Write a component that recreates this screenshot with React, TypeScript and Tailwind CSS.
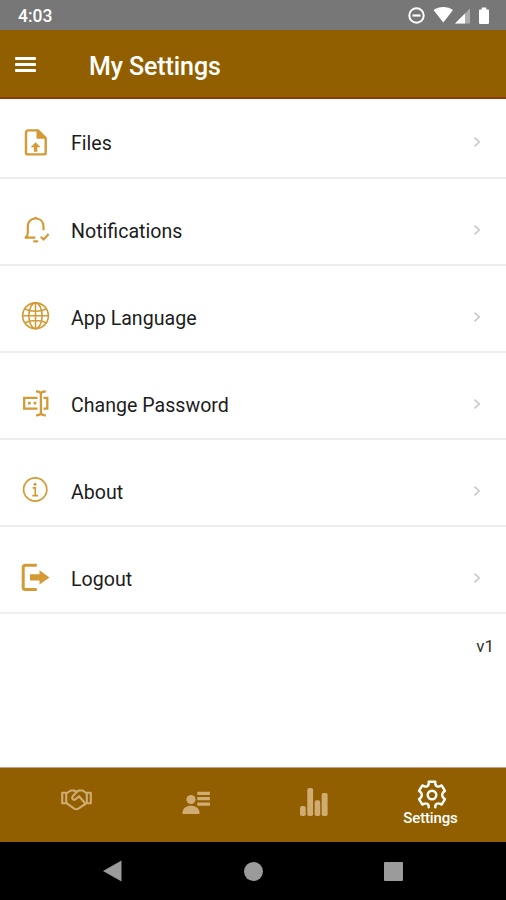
import React from 'react';

const iconClass = 'h-[31px] w-[31px] shrink-0 text-[#d39a35]';

const FilesIcon = () => (
  <svg viewBox="0 0 31 31" className={iconClass} fill="none" stroke="currentColor" strokeWidth="2.4">
    <path d="M17 4.4H7a2 2 0 0 0-2 2v20a2 2 0 0 0 2 2h15.700a2 2 0 0 0 2-2V12z" strokeLinejoin="round" />
    <path d="M15.500 4v8.700h9z" fill="currentColor" stroke="none" />
    <path d="M14.600 16.200l5 5h-3.300v4.500h-3.400v-4.500H9.600z" fill="currentColor" stroke="none" />
  </svg>
);

const BellIcon = () => (
  <svg viewBox="0 0 31 31" className={iconClass} fill="none" stroke="currentColor" strokeWidth="2.2">
    <path d="M14.500 4.500c-4.800 0-7.700 3.300-7.700 8v6.500c0 2-1 3.400-2.200 4.600h9.800" strokeLinejoin="round" />
    <path d="M14.500 4.500c4.800 0 8 3.300 8 8v3.800" />
    <path d="M12.200 4.500a2.400 2.400 0 0 1 4.600 0z" fill="currentColor" stroke="none" />
    <path d="M13.200 27.400h3" strokeLinecap="round" />
    <path d="M19.800 22.800l2.800 2.600 5-5.400" />
  </svg>
);

const GlobeIcon = () => (
  <svg viewBox="0 0 31 31" className={iconClass} fill="none" stroke="currentColor" strokeWidth="1.6">
    <circle cx="14.500" cy="14.800" r="12.900" />
    <ellipse cx="14.500" cy="14.800" rx="6.600" ry="12.900" />
    <path d="M14.500 2v26M1.600 14.800h25.800M4 8c6 3 15 3 21 0M4 21.800c6-3 15-3 21 0" />
  </svg>
);

const PasswordIcon = () => (
  <svg viewBox="0 0 31 31" className={iconClass} fill="none" stroke="currentColor" strokeWidth="2.3">
    <path d="M16.500 9.800H3.200v10.900h13.300M22.500 9.800h3.800v10.900h-3.800" />
    <path d="M15 3.400c2.800 0 4.900.6 4.900 2.800v18.400c0 2-2.100 2.800-4.900 2.800M24.800 3.400c-2.800 0-4.900.6-4.900 2.800M24.800 27.400c-2.800 0-4.900-.8-4.900-2.800" />
    <path d="M7 15.200h2.700M12.600 15.200h2.700" strokeWidth="2.700" />
  </svg>
);

const AboutIcon = () => (
  <svg viewBox="0 0 31 31" className={iconClass} fill="none" stroke="currentColor" strokeWidth="1.700">
    <circle cx="14.200" cy="14.500" r="11.600" />
    <circle cx="14" cy="9.200" r="1.500" fill="currentColor" stroke="none" />
    <path d="M11.600 12.900h2.700v7.400M11.300 20.600h5.800" />
  </svg>
);

const LogoutIcon = () => (
  <svg viewBox="0 0 31 31" className={iconClass} fill="none" stroke="currentColor" strokeWidth="3">
    <path d="M15.800 3.200H4.200a2 2 0 0 0-2 2v20.400a2 2 0 0 0 2 2h11.600" />
    <path d="M9 12.300h9.500V8.200l10 7.200-10 7.200v-4.100H9z" fill="currentColor" stroke="none" />
  </svg>
);

const HandshakeIcon = () => (
  <svg viewBox="0 0 31 22" className="h-[22px] w-[31px]" fill="none" stroke="currentColor" strokeWidth="2.100" strokeLinejoin="round">
    <path d="M1.200 3.800h4v10.400h-4zM25.800 3.800h4v10.400h-4z" />
    <path d="M5.200 4.500L9.700 1.500H13l2.500 1.300L18 1.500h3.700l4.100 3" />
    <path d="M5.200 13.800l8 5.900q2 1.200 4.200 0l8.400-5.900" />
    <path d="M16 2.600l-4.300 4.700q-1.200 2.200.6 3.300 2 .8 3.500-1.400l2.200-1.900 5.500 6.200q1 2.200-1.200 2.600" />
  </svg>
);

const ContactsIcon = () => (
  <svg viewBox="0 0 28 24" className="h-6 w-7" fill="currentColor">
    <circle cx="9" cy="8.500" r="4.600" />
    <path d="M.5 23v-1.600c0-4 4-6.600 8.500-6.600s8.500 2.600 8.500 6.600V23z" />
    <path d="M15.300.8h12.600v3.100H15.300zM15.300 6.100h12.600v3.100H15.300zM15.300 11.600h12.600v3.100H15.300z" />
  </svg>
);

const ChartIcon = () => (
  <svg viewBox="0 0 28 28" className="h-7 w-7" fill="currentColor">
    <rect y="18" width="5.700" height="10" rx="1.800" />
    <rect x="7.300" width="5.800" height="28" rx="1.800" />
    <rect x="14.700" y="12.300" width="5.500" height="15.700" rx="1.800" />
    <rect x="21.700" y="5" width="5.900" height="23" rx="1.800" />
  </svg>
);

const GearIcon = () => (
  <svg
    viewBox="-15 -15 30 30"
    className="h-[30px] w-[30px]"
    fill="none"
    stroke="currentColor"
    strokeWidth="2.400"
    strokeLinejoin="round"
    strokeLinecap="round"
  >
    <path d="M-3.300 12.300V11Q-3.500 9.400-5 8.700-6.300 8-7.600 8.700L-9.600 9.600-13 4.200-11.300 2.800Q-10.200 1.700-10.200 0T-11.300-2.800L-13-4.200-9.600-9.600-7.600-8.700Q-6.300-8-5-8.700-3.500-9.400-3.300-11V-13.200H3.300V-11Q3.500-9.400 5-8.700 6.300-8 7.600-8.700L9.600-9.600 13-4.200 11.300-2.800Q10.200-1.700 10.200 0T11.300 2.800L13 4.200 9.600 9.600 7.600 8.700Q6.300 8 5 8.700 3.500 9.400 3.300 11V12.300" />
    <circle r="4.300" />
  </svg>
);

const settingsItems = [
  { label: 'Files', icon: <FilesIcon /> },
  { label: 'Notifications', icon: <BellIcon /> },
  { label: 'App Language', icon: <GlobeIcon /> },
  { label: 'Change Password', icon: <PasswordIcon /> },
  { label: 'About', icon: <AboutIcon /> },
  { label: 'Logout', icon: <LogoutIcon /> },
];

const StatusBar = () => (
  <div className="flex h-[30px] items-center justify-between bg-[#777777] pl-[18px] pr-[15px] pt-px text-white">
    <span className="mt-0.5 text-[17.5px] font-medium leading-none">4:03</span>
    <svg viewBox="0 0 84 18" className="h-[18px] w-[84px]" fill="currentColor">
      <circle cx="9.500" cy="8.500" r="7.200" fill="none" stroke="currentColor" strokeWidth="2" />
      <path d="M5.500 7.400h8v2.200h-8z" />
      <path d="M26.500 3c5.500-4 14-4 19.500 0L36.300 15.500z" />
      <path d="M63 1.500v15H48z" opacity="0.400" />
      <path d="M58 6.500v10H48z" />
      <path d="M74.700.5h4.600v2h1.500c.8 0 1.200.5 1.200 1.200v12c0 .8-.5 1.300-1.300 1.300h-7.400c-.8 0-1.300-.5-1.300-1.300v-12c0-.8.500-1.200 1.200-1.200h1.500z" />
    </svg>
  </div>
);

export default function App() {
  return (
    <div className="flex h-[900px] w-[506px] flex-col overflow-hidden bg-white font-[Roboto,sans-serif]">
      <StatusBar />

      {/* Header */}
      <header className="flex h-[69px] items-center border-b-2 border-[#8b3a0c] bg-[#925f00] pl-[15px] text-white">
        <div className="mt-px flex w-[21px] flex-col gap-[3px]">
          <span className="h-[3px] rounded-[1px] bg-white" />
          <span className="h-[3px] rounded-[1px] bg-white" />
          <span className="h-[3px] rounded-[1px] bg-white" />
        </div>
        <h1 className="ml-[53px] mt-[5px] text-[25px] font-medium leading-none tracking-[-0.1px]">My Settings</h1>
      </header>

      {/* Settings list */}
      <main className="flex-1">
        {settingsItems.map((item, index) => (
          <div
            key={item.label}
            className={`flex items-center border-b-2 border-[#ededed] pl-[21px] pr-[25px] ${
              index === 0 ? 'h-20 pt-[7px]' : 'h-[87px] pt-4'
            }`}
          >
            {item.icon}
            <span className="ml-[19px] mt-1 flex-1 text-[19.6px] leading-none text-[#1c1c1c]">{item.label}</span>
            <svg viewBox="0 0 8 12" className="h-3 w-2 text-[#c8c8c8]" fill="none" stroke="currentColor" strokeWidth="1.600">
              <path d="M1.500 1.700L6.200 6l-4.700 4.300" />
            </svg>
          </div>
        ))}
        <p className="mt-6 pr-3 text-right text-[17px] leading-none text-[#303030]">v1</p>
      </main>

      {/* Tabs */}
      <nav className="grid h-[75px] grid-cols-4 border-t border-[#c9a083] bg-[#925f00] pl-[19px] pr-[15px] text-[#d0ab72]">
        <div className="flex justify-center pr-[3px] pt-[21px]">
          <HandshakeIcon />
        </div>
        <div className="flex justify-center pt-[23px]">
          <ContactsIcon />
        </div>
        <div className="flex justify-center pt-5">
          <ChartIcon />
        </div>
        <div className="flex flex-col items-center pt-3 text-white">
          <GearIcon />
          <span className="mr-[3px] mt-px text-[15px] font-medium leading-none tracking-[-0.15px]">Settings</span>
        </div>
      </nav>

      {/* Android navigation */}
      <div className="flex h-[58px] items-center justify-between bg-black px-[103px]">
        <svg viewBox="0 0 20 22" className="h-[22px] w-5" fill="#9b9b9b">
          <path d="M0 11L18.500.5v21z" />
        </svg>
        <span className="h-[19px] w-[19px] rounded-full bg-[#9b9b9b]" />
        <span className="h-[19px] w-[19px] rounded-[1px] bg-[#9b9b9b]" />
      </div>
    </div>
  );
}
